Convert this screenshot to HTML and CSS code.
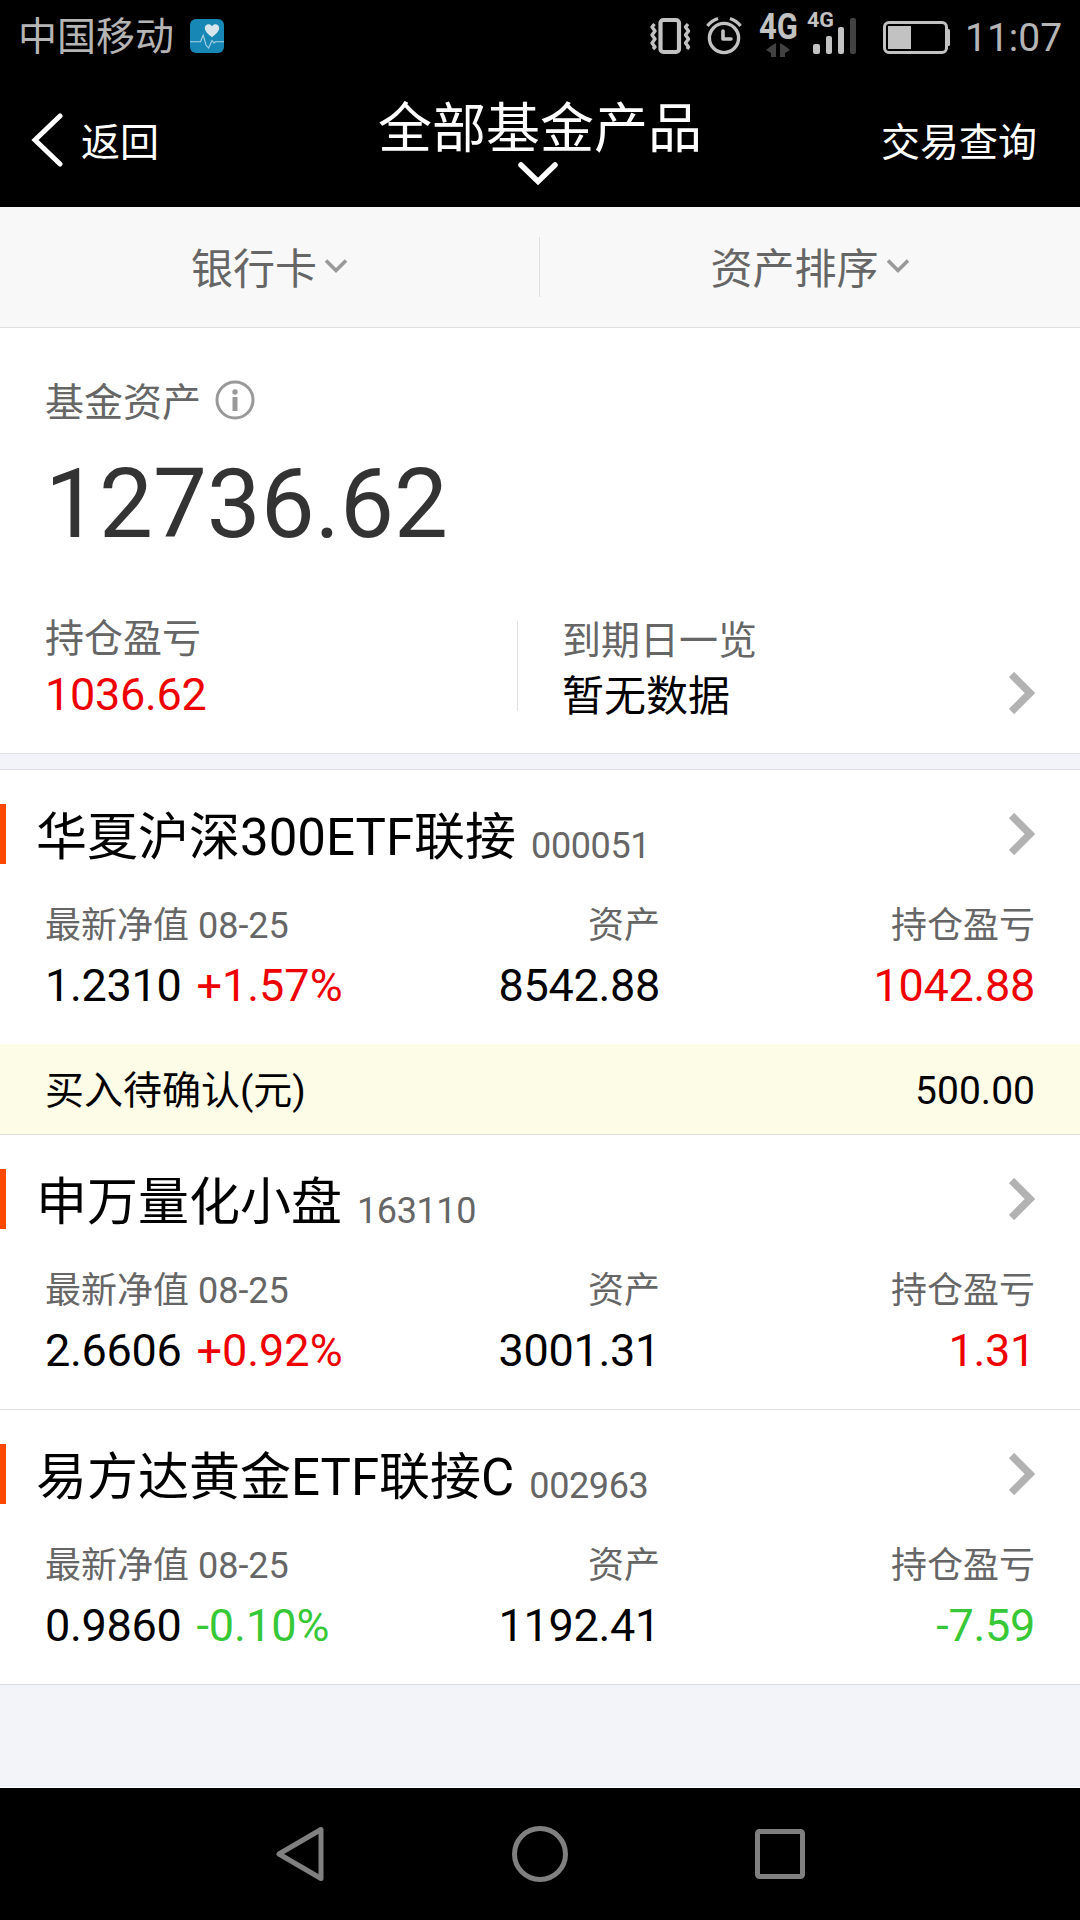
FILE: index.html
```html
<!DOCTYPE html>
<html lang="zh-CN">
<head>
<meta charset="utf-8">
<title>全部基金产品</title>
<link rel="stylesheet" href="styles.css">
</head>
<body>
<svg class="defs" width="0" height="0">
  <symbol id="next" viewBox="0 0 26 42"><path d="M2.5 2.5 L21 21 L2.5 39.5" fill="none" stroke="#b2b2b2" stroke-width="7.5"/></symbol>
  <symbol id="drop" viewBox="0 0 24 16"><path d="M2 2.5 L12 12.5 L22 2.5" fill="none" stroke="#999" stroke-width="3.6"/></symbol>
</svg>

<header class="top">
  <div class="status">
    <span class="carrier">中国移动</span>
    <svg class="app-icon" width="34" height="34" viewBox="0 0 34 34">
      <rect width="34" height="34" rx="6" fill="#1787b5"/>
      <path d="M22 18.2 C18 15.2 14.8 12.2 14.8 9 C14.8 4.8 20 3.8 22 7.2 C24 3.8 29.2 4.8 29.2 9 C29.2 12.2 26 15.2 22 18.2Z" fill="#d7e6ec"/>
      <path d="M0 22.8 H10.5 L13.2 16.2 L16 26 L18.6 29 L22 21.5 L24 24 L25.5 22.8 H34" fill="none" stroke="#a9d3e3" stroke-width="1.1"/>
    </svg>
    <svg class="status-icons" width="306" height="62" viewBox="648 0 306 62">
      <g fill="none" stroke="#c2c2c2">
        <rect x="661.5" y="20" width="18.5" height="32" rx="3" stroke-width="4.2"/>
        <path d="M655.5 24 L653 27 L656 31 L653 35 L656 39 L653 43 L656 47 L654 49" stroke-width="3.4" stroke-linejoin="round"/>
        <path d="M689 24 L686.5 27 L689.5 31 L686.5 35 L689.5 39 L686.5 43 L689.5 47 L688 49" stroke-width="3.4" stroke-linejoin="round"/>
        <circle cx="725" cy="38" r="14.6" stroke-width="3.4"/>
        <path d="M724 31 V39 H732" stroke-width="3.6" stroke-linecap="round" stroke-linejoin="round"/>
        <path d="M708.5 26 Q712 21 719 18.5 M741.5 26 Q738 21 731 18.5" stroke-width="3.2"/>
        <rect x="885.5" y="22.5" width="62" height="30" rx="4.5" stroke-width="3"/>
      </g>
      <text class="net" x="760" y="38.5" font-size="36" textLength="39" lengthAdjust="spacingAndGlyphs">4G</text>
      <text class="net" x="808" y="27" font-size="21" textLength="27" lengthAdjust="spacingAndGlyphs">4G</text>
      <path d="M777 43 V57 H772 V53 L767 50 L772 46Z M781 43 V57 H786 V53 L791 50 L786 46Z" fill="#424242"/>
      <g fill="#c2c2c2">
        <rect x="814" y="44" width="7" height="10" rx="2"/>
        <rect x="827" y="36" width="6" height="18" rx="2"/>
        <rect x="839" y="27" width="6" height="27" rx="2"/>
        <rect x="889" y="26" width="23" height="23"/>
        <path d="M948 29 h1.5 q1.5 0 1.5 1.5 v14 q0 1.5 -1.5 1.5 h-1.5z"/>
      </g>
      <rect x="851" y="18" width="6" height="36" rx="2" fill="#424242"/>
    </svg>
    <span class="clock">11:07</span>
  </div>
  <nav class="titlebar">
    <div class="back">
      <svg width="32" height="54" viewBox="0 0 32 54"><path d="M29 3 L4 27 L29 51" fill="none" stroke="#fff" stroke-width="5" stroke-linecap="round"/></svg>
      <span>返回</span>
    </div>
    <div class="title">
      <h1>全部基金产品</h1>
      <svg width="40" height="26" viewBox="0 0 40 26"><path d="M3 4 L20 20.5 L37 4" fill="none" stroke="#fff" stroke-width="5.5" stroke-linecap="round"/></svg>
    </div>
    <div class="query">交易查询</div>
  </nav>
</header>

<div class="filters">
  <div class="filter">银行卡<svg width="24" height="16"><use href="#drop"/></svg></div>
  <div class="filter-line"></div>
  <div class="filter">资产排序<svg width="24" height="16"><use href="#drop"/></svg></div>
</div>

<section class="summary">
  <div class="asset-label">基金资产
    <svg width="40" height="40" viewBox="0 0 40 40"><circle cx="20" cy="20" r="18" fill="none" stroke="#999" stroke-width="3"/><circle cx="20" cy="12" r="2.7" fill="#999"/><rect x="17.5" y="17" width="5" height="14" fill="#999"/></svg>
  </div>
  <div class="asset-total">12736.62</div>
  <div class="summary-row">
    <div class="profit"><div class="caption">持仓盈亏</div><div class="amount up">1036.62</div></div>
    <div class="summary-line"></div>
    <div class="due"><div class="caption">到期日一览</div><div class="none">暂无数据</div></div>
    <svg class="due-arrow" width="26" height="42"><use href="#next"/></svg>
  </div>
</section>

<main class="funds">
  <article class="fund">
    <div class="fund-head"><h2>华夏沪深300ETF联接</h2><span class="code">000051</span><svg width="26" height="42"><use href="#next"/></svg></div>
    <div class="cells">
      <div><div class="label">最新净值 08-25</div><div class="value">1.2310 <span class="rate up">+1.57%</span></div></div>
      <div><div class="label">资产</div><div class="value">8542.88</div></div>
      <div><div class="label">持仓盈亏</div><div class="value up">1042.88</div></div>
    </div>
  </article>
  <div class="pending"><span>买入待确认(元)</span><span>500.00</span></div>
  <article class="fund ruled">
    <div class="fund-head"><h2>申万量化小盘</h2><span class="code">163110</span><svg width="26" height="42"><use href="#next"/></svg></div>
    <div class="cells">
      <div><div class="label">最新净值 08-25</div><div class="value">2.6606 <span class="rate up">+0.92%</span></div></div>
      <div><div class="label">资产</div><div class="value">3001.31</div></div>
      <div><div class="label">持仓盈亏</div><div class="value up">1.31</div></div>
    </div>
  </article>
  <article class="fund ruled">
    <div class="fund-head"><h2>易方达黄金ETF联接C</h2><span class="code">002963</span><svg width="26" height="42"><use href="#next"/></svg></div>
    <div class="cells">
      <div><div class="label">最新净值 08-25</div><div class="value">0.9860 <span class="rate down">-0.10%</span></div></div>
      <div><div class="label">资产</div><div class="value">1192.41</div></div>
      <div><div class="label">持仓盈亏</div><div class="value down">-7.59</div></div>
    </div>
  </article>
</main>

<footer class="navbar">
  <svg width="50" height="56" viewBox="0 0 50 56"><path d="M46 3.5 V52.5 L4 28Z" fill="none" stroke="#808080" stroke-width="5" stroke-linejoin="round"/></svg>
  <svg width="56" height="56" viewBox="0 0 56 56"><circle cx="28" cy="28" r="25.5" fill="none" stroke="#808080" stroke-width="5"/></svg>
  <svg width="50" height="50" viewBox="0 0 50 50"><rect x="2.5" y="2.5" width="45" height="45" rx="2" fill="none" stroke="#808080" stroke-width="5"/></svg>
</footer>
</body>
</html>
```
FILE: styles.css
```css
* { box-sizing: border-box; }

body {
  margin: 0;
  width: 1080px;
  height: 1920px;
  overflow: hidden;
  display: flex;
  flex-direction: column;
  background: #f3f4f9;
  color: #000;
  font-family: Roboto, "Noto Sans CJK SC", sans-serif;
}

svg { display: block; flex: none; }
.defs { display: none; }
h1, h2 { margin: 0; font-weight: 400; }

.up { color: #ee0000; }
.down { color: #37c837; }

/* status bar and title */
.top { height: 207px; background: #000; color: #fff; }

.status {
  display: flex;
  height: 72px;
  padding: 0 18px;
  color: #b5b5b5;
  font-size: 39px;
  line-height: 48px;
}
.carrier { flex: none; width: 156px; margin-top: 13px; white-space: nowrap; }
.app-icon { margin: 19px 0 0 16px; }
.status-icons { margin: 0 0 0 423px; }
.clock { margin: 14px 0 0 12px; white-space: nowrap; }
.net { fill: #c2c2c2; font-weight: 700; }

.titlebar {
  display: grid;
  grid-template-columns: 1fr 324px 1fr;
  height: 135px;
  padding: 0 43px 0 31px;
  font-size: 39px;
  line-height: 48px;
}
.back { display: flex; gap: 18px; padding-top: 41px; }
.back span { margin-top: 6px; }
.title { display: flex; flex-direction: column; align-items: center; padding-top: 25px; margin-left: 6px; margin-right: -6px; }
.title h1 { font-size: 54px; line-height: 66px; white-space: nowrap; }
.title svg { margin: -2px 5px 0 0; }
.query { padding-top: 47px; text-align: right; }

/* filters */
.filters {
  display: grid;
  grid-template-columns: 539px 1px 1fr;
  align-items: center;
  height: 121px;
  border-bottom: 1px solid #dedfe0;
  background: #f8f8f8;
}
.filter {
  display: flex;
  justify-content: center;
  align-items: center;
  gap: 7px;
  color: #666;
  font-size: 42px;
  line-height: 60px;
  padding-top: 6px;
}
.filter svg { margin-bottom: 8px; }
.filter-line, .summary-line { background: #dfdfe4; }
.filter-line { height: 60px; }

/* account totals */
.summary {
  height: 426px;
  padding: 51px 45px 0;
  border-bottom: 1px solid #dddfe3;
  background: #fff;
}
.asset-label {
  display: flex;
  gap: 14px;
  color: #666;
  font-size: 39px;
  line-height: 48px;
}
.asset-label svg { margin-top: 1px; }
.asset-total { margin-top: 29px; color: #333; font-size: 96px; line-height: 96px; }
.summary-row {
  display: grid;
  grid-template-columns: 472px 1px 1fr 26px;
  margin-top: 62px;
}
.caption { margin-top: 1px; color: #666; font-size: 39px; line-height: 48px; }
.amount { margin-top: 5px; font-size: 45px; line-height: 54px; letter-spacing: -0.3px; }
.summary-line { height: 90px; margin-top: 7px; }
.due { padding: 2px 0 0 44px; }
.none { margin-top: 5px; font-size: 42px; line-height: 54px; }
.due-arrow { margin-top: 58px; }

/* holdings */
.funds {
  margin-top: 15px;
  border-top: 1px solid #dddfe3;
  background: #fff;
}
.fund { padding: 34px 0 31px; }
.ruled { border-bottom: 1px solid #dddfdf; }
.fund-head {
  display: flex;
  height: 60px;
  padding: 0 45px 0 30px;
  border-left: 6px solid #ff4800;
  line-height: 60px;
}
.fund-head h2 { margin-top: 4px; font-size: 51px; }
.code { margin: 12px 0 0 15px; color: #666; font-size: 36px; letter-spacing: -0.4px; }
.fund-head svg { margin: 9px 0 0 auto; }
.cells {
  display: grid;
  grid-template-columns: 345px 270px 375px;
  padding: 0 45px;
  margin-top: 38px;
  text-align: right;
}
.cells > div:first-child { text-align: left; }
.label { color: #666; font-size: 36px; line-height: 48px; }
.value { margin-top: 9px; font-size: 45px; line-height: 54px; letter-spacing: -0.3px; }
.rate { margin-left: 4px; letter-spacing: 0; }

.pending {
  display: flex;
  justify-content: space-between;
  height: 91px;
  padding: 2px 45px 0;
  border-bottom: 1px solid #dddfdf;
  background: #fdfce7;
  font-size: 39px;
  line-height: 90px;
}

/* system keys */
.navbar {
  display: flex;
  justify-content: space-between;
  align-items: center;
  height: 133px;
  margin-top: auto;
  padding: 0 275px;
  border-top: 1px solid #fff;
  background: #000;
}
```
